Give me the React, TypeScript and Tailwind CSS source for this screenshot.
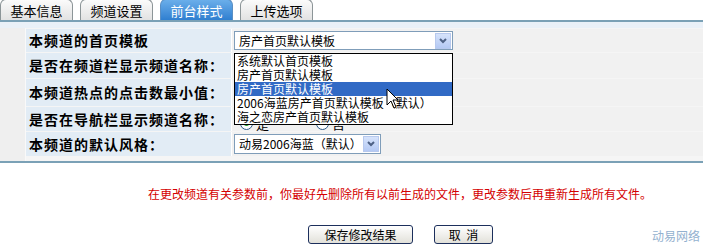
import React from "react";

const FONT = { fontFamily: '"Noto Sans CJK SC", "Noto Sans", sans-serif' };

function Tab({ label, active }: { label: string; active?: boolean }) {
  return (
    <div
      className={
        "w-[73px] h-[21px] rounded-t-[6px] border border-b-0 flex items-center justify-center text-[13px] leading-none " +
        (active
          ? "border-[#5a8fc4] bg-gradient-to-b from-[#6aaeea] to-[#2f7fd0] text-white"
          : "border-[#8c9598] bg-gradient-to-b from-[#fbfbfb] to-[#e2e2e2] text-black")
      }
    >
      {label}
    </div>
  );
}

function Arrow() {
  return (
    <div className="w-[16px] h-[16px] bg-gradient-to-b from-[#d6e3fb] to-[#b4c9f4] border border-[#b7c9ee] flex items-center justify-center">
      <svg width="8" height="6" viewBox="0 0 8 6">
        <path d="M1 1 L4 4 L7 1" stroke="#4d6185" strokeWidth="2" fill="none" />
      </svg>
    </div>
  );
}

function Radio({ checked, label }: { checked?: boolean; label: string }) {
  return (
    <div className="flex items-center gap-[3px] text-[13px] leading-none">
      <div className="w-[13px] h-[13px] rounded-full border border-[#2c5a8a] bg-white flex items-center justify-center">
        {checked && <div className="w-[5px] h-[5px] rounded-full bg-[#21a121]" />}
      </div>
      <span>{label}</span>
    </div>
  );
}

export default function App() {
  const rows = [
    { label: "本频道的首页模板", h: "h-[23px]" },
    { label: "是否在频道栏显示频道名称：", h: "h-[25px]" },
    { label: "本频道热点的点击数最小值：", h: "h-[27px]" },
    { label: "是否在导航栏显示频道名称：", h: "h-[24px]" },
    { label: "本频道的默认风格：", h: "h-[24px]" },
  ];
  return (
    <div className="w-[703px] h-[245px] bg-white relative overflow-hidden" style={FONT}>
      {/* tabs */}
      <div className="flex gap-[7px] h-[22px] items-end border-b-2 border-[#7ba1b6]">
        <Tab label="基本信息" />
        <Tab label="频道设置" />
        <Tab label="前台样式" active />
        <Tab label="上传选项" />
      </div>
      <div className="h-[6px] bg-[#eaf1f8]" />
      {/* form */}
      <div className="flex bg-[#efefef] border-b-2 border-[#7ba1b6]">
        <div className="w-[26px] shrink-0 border-r border-[#f9f9f9]" />
        <div className="flex-1 flex flex-col gap-[1px] pt-[1px] pb-[5px] bg-[#f5f5f5]">
          {rows.map((r, i) => (
            <div key={i} className={"flex " + r.h}>
              <div className="w-[205px] bg-[#e2ecf5] flex items-center pl-[3px] text-[14px] font-bold tracking-[1px] text-black whitespace-nowrap">
                {r.label}
              </div>
              <div className="w-[1px] bg-white" />
              <div className="flex-1 bg-[#f1f1f1] flex items-center pl-[2px]">
                {i === 0 && (
                  <div className="w-[219px] h-[19px] border border-[#7f9db9] bg-white flex items-center justify-between pl-[4px] pr-[1px] text-[12px] leading-none">
                    <span>房产首页默认模板</span>
                    <Arrow />
                  </div>
                )}
                {i === 3 && (
                  <div className="flex gap-[47px] pl-[6px] pt-[8px]">
                    <Radio checked label="是" />
                    <Radio label="否" />
                  </div>
                )}
                {i === 4 && (
                  <div className="w-[147px] h-[20px] border border-[#7f9db9] bg-white flex items-center justify-between pl-[4px] pr-[1px] text-[12px] leading-none whitespace-nowrap">
                    <span>动易2006海蓝（默认）</span>
                    <Arrow />
                  </div>
                )}
              </div>
            </div>
          ))}
        </div>
      </div>
      {/* notice */}
      <div className="pt-[25px] pl-[148px] text-[12px] text-[#d40000] leading-none h-[62px]">
        在更改频道有关参数前，你最好先删除所有以前生成的文件，更改参数后再重新生成所有文件。
      </div>
      <div className="flex items-start pl-[308px] gap-[21px] text-[12px]">
        <button className="w-[105px] h-[19px] rounded-[3px] border border-[#1c2f5c] bg-gradient-to-b from-[#ffffff] to-[#e2e1da] leading-none">
          保存修改结果
        </button>
        <button className="w-[59px] h-[19px] rounded-[3px] border border-[#1c2f5c] bg-gradient-to-b from-[#ffffff] to-[#e2e1da] leading-none">
          取&nbsp;&nbsp;消
        </button>
        <span className="ml-auto mr-[3px] mt-[5px] text-[#93b1cf] text-[12px] leading-none">动易网络</span>
      </div>
      {/* dropdown list overlay */}
      <div className="absolute left-[234px] top-[53px] w-[219px] border border-black bg-white text-[12px] leading-[14px]">
        {["系统默认首页模板", "房产首页默认模板", "房产首页默认模板", "2006海蓝房产首页默认模板（默认）", "海之恋房产首页默认模板"].map((t, i) => (
          <div key={i} className={"pl-[2px] h-[14px] whitespace-nowrap " + (i === 2 ? "bg-[#316ac5] text-white" : "text-black")}>
            {t}
          </div>
        ))}
      </div>
      {/* mouse cursor */}
      <svg className="absolute left-[386px] top-[88px]" width="14" height="22" viewBox="0 0 14 22">
        <path d="M1 1 L1 17 L5 13 L8 20 L10 19 L7 12 L12 12 Z" fill="white" stroke="black" strokeWidth="1" strokeLinejoin="miter" />
      </svg>
    </div>
  );
}
